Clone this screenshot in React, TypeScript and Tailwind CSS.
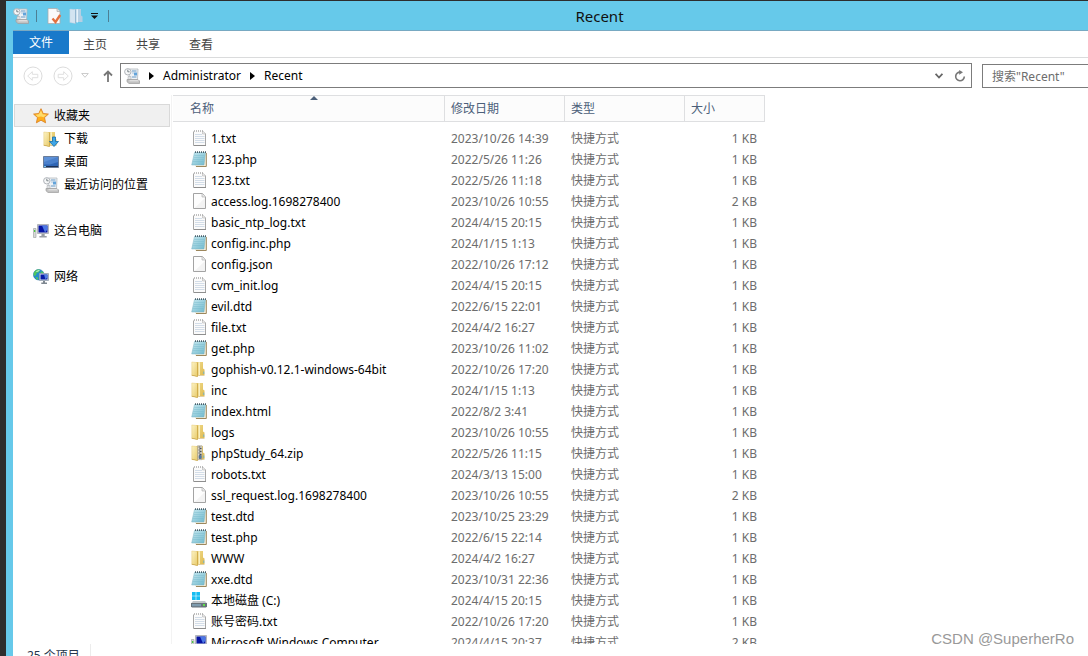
import type { ReactNode } from "react";

type IconKind =
  | "text" | "notepad" | "blank" | "folder" | "zip" | "drive" | "computer"
  | "star" | "download" | "desktop" | "recent" | "network" | "properties" | "newFolder";

type FileRow = { name: string; icon: IconKind; date: string; size: string };

const FILES: FileRow[] = [
  { name: "1.txt", icon: "text", date: "2023/10/26 14:39", size: "1 KB" },
  { name: "123.php", icon: "notepad", date: "2022/5/26 11:26", size: "1 KB" },
  { name: "123.txt", icon: "text", date: "2022/5/26 11:18", size: "1 KB" },
  { name: "access.log.1698278400", icon: "blank", date: "2023/10/26 10:55", size: "2 KB" },
  { name: "basic_ntp_log.txt", icon: "text", date: "2024/4/15 20:15", size: "1 KB" },
  { name: "config.inc.php", icon: "notepad", date: "2024/1/15 1:13", size: "1 KB" },
  { name: "config.json", icon: "blank", date: "2022/10/26 17:12", size: "1 KB" },
  { name: "cvm_init.log", icon: "text", date: "2024/4/15 20:15", size: "1 KB" },
  { name: "evil.dtd", icon: "notepad", date: "2022/6/15 22:01", size: "1 KB" },
  { name: "file.txt", icon: "text", date: "2024/4/2 16:27", size: "1 KB" },
  { name: "get.php", icon: "notepad", date: "2023/10/26 11:02", size: "1 KB" },
  { name: "gophish-v0.12.1-windows-64bit", icon: "folder", date: "2022/10/26 17:20", size: "1 KB" },
  { name: "inc", icon: "folder", date: "2024/1/15 1:13", size: "1 KB" },
  { name: "index.html", icon: "notepad", date: "2022/8/2 3:41", size: "1 KB" },
  { name: "logs", icon: "folder", date: "2023/10/26 10:55", size: "1 KB" },
  { name: "phpStudy_64.zip", icon: "zip", date: "2022/5/26 11:15", size: "1 KB" },
  { name: "robots.txt", icon: "text", date: "2024/3/13 15:00", size: "1 KB" },
  { name: "ssl_request.log.1698278400", icon: "blank", date: "2023/10/26 10:55", size: "2 KB" },
  { name: "test.dtd", icon: "notepad", date: "2023/10/25 23:29", size: "1 KB" },
  { name: "test.php", icon: "notepad", date: "2022/6/15 22:14", size: "1 KB" },
  { name: "WWW", icon: "folder", date: "2024/4/2 16:27", size: "1 KB" },
  { name: "xxe.dtd", icon: "notepad", date: "2023/10/31 22:36", size: "1 KB" },
  { name: "本地磁盘 (C:)", icon: "drive", date: "2024/4/15 20:15", size: "1 KB" },
  { name: "账号密码.txt", icon: "text", date: "2022/10/26 17:20", size: "1 KB" },
  { name: "Microsoft Windows Computer", icon: "computer", date: "2024/4/15 20:37", size: "2 KB" },
];

const FAVORITES: { name: string; icon: IconKind }[] = [
  { name: "下载", icon: "download" },
  { name: "桌面", icon: "desktop" },
  { name: "最近访问的位置", icon: "recent" },
];

const FOLDER_ART = (
  <>
    <path d="M5 1h7v6.5l1.5 1V14H5z" fill="url(#folder-back)" />
    <path d="M7.5 1.3H9v13.2H7.5z" fill="#faf0bf" />
    <path d="M.8 1l5.7.6v14L.8 14.4z" fill="url(#folder-front)" stroke="#e0c063" strokeWidth=".4" />
    <path d="M6 1.6h1v14H6z" fill="#c9a33f" opacity=".75" />
    <path d="M.8 13.8l5.7 1.4v.6L.8 14.6zM7 14h6.5v.6H7z" fill="#c4a04a" />
    <path d="M12.4 10.5h.8V13h-.8z" fill="#5cb0dc" />
  </>
);

const ICON_ART: Record<IconKind, ReactNode> = {
  text: (
    <>
      <path d="M2.5 1h9.5l2.5 3v11.5h-12z" fill="#fbfbfb" />
      <path d="M2.5 1.5v14h12V4" fill="none" stroke="#a6a6a6" />
      <path d="M3 15.5h12" stroke="#8e8e8e" />
      <path d="M11.5.8V4H15z" fill="#e9e9e9" stroke="#b5b5b5" strokeWidth=".6" />
      <path d="M3 1h9" stroke="#ababab" strokeWidth="1.6" strokeDasharray="1 1" />
      <path d="M4 4.5h7M4 6.5h9.5M4 8.5h9.5M4 10.5h9.5M4 12.5h9.5" stroke="#d3dde8" />
    </>
  ),
  notepad: (
    <>
      <path d="M5 1.5h10.5v14H4z" fill="#f5eedb" />
      <path d="M15.3 2v13.5H5" fill="none" stroke="#9d875c" />
      <path d="M3.5 1.5h11L13 14H.7z" fill="url(#notepad-page)" stroke="#78b3c3" strokeWidth=".5" />
      <path d="M3.4 4.5h10M3 6.5h10M2.5 8.5h10.3M2 10.5h10.5" stroke="#75b8c9" strokeWidth=".4" />
      <path d="M4 1.2h11" stroke="#4a606c" strokeWidth="1.7" strokeDasharray="1 1" />
    </>
  ),
  blank: (
    <>
      <path d="M2.5.5h9l3 3.5v11.5h-12z" fill="#fdfdfd" stroke="#a3a3a3" />
      <path d="M11 .5V4h3.5" fill="#e9e9e9" stroke="#b3b3b3" strokeWidth=".7" />
      <path d="M3.5 15L14 5v10z" fill="#f3f3f3" />
    </>
  ),
  folder: FOLDER_ART,
  zip: (
    <>
      {FOLDER_ART}
      <path d="M6.5.7h4.5v14H6.5z" fill="#dcd8c9" stroke="#9e9883" strokeWidth=".5" />
      <path d="M7.5 2h2M8.5 3.5h2M7.5 5h2M8.5 6.5h2M7.5 8h2M8.5 9.5h2" stroke="#50545a" />
      <path d="M8 10.5h2.3v3H8z" fill="#5380b0" stroke="#454f5b" strokeWidth=".5" />
    </>
  ),
  drive: (
    <>
      <path d="M1 0h3.7v3.7H1zM5.3 0H9v3.7H5.3zM1 4.3h3.7V8H1zM5.3 4.3H9V8H5.3z" fill="#15bdf2" />
      <path d="M2 9h12l2 2.5H0z" fill="#c0c6ca" />
      <path d="M0 11h16v3.5l-1 1H1l-1-1z" fill="#68737b" />
      <path d="M1 12h9v2.3H1z" fill="#7d9bae" />
      <path d="M12 12h2v2h-2z" fill="#5ee04a" />
    </>
  ),
  computer: (
    <>
      <path d="M.5 5.5h2.5v9H.5z" fill="#d7d9d8" stroke="#a4a8a8" strokeWidth=".7" />
      <path d="M1 7h1.3v2H1z" fill="#4dc743" />
      <path d="M4.5 1.5h11v9h-11z" fill="#d7d9dc" stroke="#a4a7ae" strokeWidth=".8" />
      <path d="M5.5 2.5h9v7h-9z" fill="#0714a3" />
      <path d="M9 2.5h5.5v4L12 9.5z" fill="#4c77e4" />
      <path d="M8.5 11h3.2v2h2v1.6H6.4V13h2z" fill="#999ea4" />
    </>
  ),
  star: (
    <>
      <path d="M8 .7l2.2 4.8 5.2.6-3.9 3.5 1.1 5.2L8 12.2l-4.6 2.6 1.1-5.2L.6 6.1l5.2-.6z" fill="#ffae1c" stroke="#dc8527" strokeWidth=".9" strokeLinejoin="round" />
      <path d="M8 2.4l1.6 3.9 4 .5-3 2.4-2.6-.7-3.2.6-2.3-2.3 3.3-.5z" fill="#ffdc6a" />
    </>
  ),
  download: (
    <>
      {FOLDER_ART}
      <path d="M9.5 6h3v4.5h3L11 15.5l-4.5-5h3z" fill="#3fa6e8" stroke="#156ca8" strokeWidth=".8" />
    </>
  ),
  desktop: (
    <>
      <path d="M.5 2.5h15v11H.5z" fill="#2e65b5" stroke="#6b7d98" />
      <path d="M1 3h14v5L7 10.5H1z" fill="#4a80cc" />
      <path d="M1 3h14L1 8z" fill="#6798db" opacity=".7" />
      <path d="M1 12h14v1H1z" fill="#1b2f53" />
      <path d="M1 12h2v1H1z" fill="#6fc2ef" />
    </>
  ),
  recent: (
    <>
      <path d="M5.5 1h8.5l-.5 11H5z" fill="#eef2f6" stroke="#b3b9be" strokeWidth=".8" />
      <path d="M8 3h4.5M8.5 5h1M8 9h4.5" stroke="#699ac5" />
      <path d="M10 4.5h3v3h-3z" fill="#62a3da" />
      <path d="M4 8.5h3v3H4z" fill="#dfe1e3" stroke="#a9adb0" strokeWidth=".5" />
      <path d="M3 11.5h10l2.5 1.3v2.7H5L3 13.8z" fill="#c2c2c2" stroke="#9c9c9c" strokeWidth=".7" />
      <path d="M5.5 12.8h9" stroke="#ececec" />
      <circle cx="3.8" cy="3.8" r="3.2" fill="#f6f7f8" stroke="#a8adb2" strokeWidth=".9" />
      <path d="M3.8 1.7v2.1h1.8" fill="none" stroke="#5e6970" strokeWidth=".8" />
    </>
  ),
  network: (
    <>
      <circle cx="5.7" cy="5.7" r="5.3" fill="#248dcd" stroke="#176da8" strokeWidth=".5" />
      <path d="M2 2.1C3.7.4 5.8.3 7 1L5.9 3.2 3.7 4 3 6.3.9 7C.3 5 .8 3.3 2 2.1zM7.5 2.5l2.6.2.8 2.4-2.7.2zM2.5 8l2.2.3.5 2.3-1.5-.2z" fill="#4fc65d" />
      <path d="M3.4 2.5l3-1" stroke="#d3f6ea" />
      <path d="M6.5 4.5h9v7h-9z" fill="#dce3ea" stroke="#8f9cac" strokeWidth=".8" />
      <path d="M7.5 5.5h7v5h-7z" fill="#091ca6" />
      <path d="M11 5.5h3.5v2.8l-2 2.2z" fill="#527ee4" />
      <path d="M10 12h2v1.5h2v1.5H8.3v-1.5H10z" fill="#7e8790" />
    </>
  ),
  properties: (
    <>
      <path d="M1 .5h9l3 3v12H1z" fill="#fafafa" stroke="#a9acae" strokeWidth=".8" />
      <path d="M10 .5v3h3" fill="#ddd" stroke="#aaa" strokeWidth=".7" />
      <path d="M5.5 10.5L8.5 14l4.7-7" fill="none" stroke="#e3703f" strokeWidth="2.3" />
    </>
  ),
  newFolder: (
    <>
      <path d="M5 1h7v6.5l1.5 1V14H5z" fill="#b5cfe3" />
      <path d="M7.5 1.3H9v13.2H7.5z" fill="#e7f2fa" />
      <path d="M.8 1l5.7.6v14L.8 14.4z" fill="#d3e4f1" stroke="#b4cde0" strokeWidth=".4" />
      <path d="M6 1.6h1v14H6z" fill="#93b6d0" />
    </>
  ),
};

/** Gradients shared by the file icons. */
function IconGradients() {
  return (
    <svg className="absolute size-0" aria-hidden="true">
      <defs>
        <linearGradient id="folder-front" x1="0" y1="0" x2="1" y2="1">
          <stop offset="0" stopColor="#fcf3c4" />
          <stop offset="1" stopColor="#e8ca69" />
        </linearGradient>
        <linearGradient id="folder-back" x1="0" y1="0" x2="1" y2="1">
          <stop offset="0" stopColor="#f0dc8e" />
          <stop offset="1" stopColor="#dfba50" />
        </linearGradient>
        <linearGradient id="notepad-page" x1="0" y1="0" x2="1" y2="1">
          <stop offset="0" stopColor="#c6e7ef" />
          <stop offset="1" stopColor="#6fb9cd" />
        </linearGradient>
      </defs>
    </svg>
  );
}

function Icon({ kind }: { kind: IconKind }) {
  return (
    <svg viewBox="0 0 16 16" className="size-4 shrink-0" aria-hidden="true">
      {ICON_ART[kind]}
    </svg>
  );
}

function RoundArrow({ flip, label }: { flip?: boolean; label: string }) {
  return (
    <button type="button" aria-label={label} disabled>
      <svg viewBox="0 0 20 20" className={flip ? "size-5 rotate-180" : "size-5"} fill="none" stroke="#dcdcdc">
        <circle cx="10" cy="10" r="9" />
        <path d="M4.7 10l4.6-4.3v2.6h5.5v3.4H9.3v2.6z" strokeWidth=".9" />
      </svg>
    </button>
  );
}

function Crumb({ name }: { name: string }) {
  return (
    <>
      <svg viewBox="0 0 5 8" className="h-2 w-[5px] shrink-0" aria-hidden="true">
        <path d="M0 0l5 4-5 4z" fill="#000" />
      </svg>
      <button type="button" className="text-black">{name}</button>
    </>
  );
}

function TitleBar() {
  return (
    <header className="flex h-[30px] shrink-0 items-center border-b border-[#78a9c2] bg-[#66c9ea]">
      <Icon kind="recent" />
      <span className="ml-[7px] h-3 w-px bg-[#4d7f94]" />
      <button type="button" aria-label="属性" className="ml-2.5"><Icon kind="properties" /></button>
      <button type="button" aria-label="新建文件夹" className="ml-1.5"><Icon kind="newFolder" /></button>
      <button type="button" aria-label="自定义快速访问工具栏" className="ml-[6px]">
        <svg viewBox="0 0 7 6" className="h-1.5 w-[7px]">
          <path d="M0 0h7v1H0zM0 2.5h7L3.5 6z" fill="#111" />
        </svg>
      </button>
      <span className="ml-2.5 h-3 w-px bg-[#4d7f94]" />
      <h1 className="flex-1 pl-0.5 text-center text-[15px] leading-5 text-[#111]">Recent</h1>
    </header>
  );
}

function RibbonTabs() {
  return (
    <nav className="flex h-[27px] shrink-0 border-b border-[#dadbdc]">
      <button type="button" className="h-[23px] w-14 bg-[#1979ca] text-white">文件</button>
      {["主页", "共享", "查看"].map((tab) => (
        <button key={tab} type="button" className="w-[53px] pt-px pr-px text-[#444]">{tab}</button>
      ))}
    </nav>
  );
}

function AddressRow() {
  return (
    <div className="flex shrink-0 items-center pt-[5px] pb-[7px] pl-2.5">
      <RoundArrow label="后退" />
      <span className="w-2.5" />
      <RoundArrow flip label="前进" />
      <button type="button" aria-label="最近浏览的位置" className="ml-2">
        <svg viewBox="0 0 8 5" className="h-[5px] w-2">
          <path d="M.7.5h6.6L4 4.3z" fill="none" stroke="#ccc" />
        </svg>
      </button>
      <button type="button" aria-label="上移" className="ml-3.5">
        <svg viewBox="0 0 10 12" className="h-3 w-2.5" fill="none" stroke="#777" strokeWidth="1.8">
          <path d="M5 12V1.5M1 5.5l4-4 4 4" />
        </svg>
      </button>
      <div className="ml-[7px] flex h-[25px] min-w-0 flex-1 items-center gap-[9px] border border-[#7c7c7c] px-[3px]">
        <Icon kind="recent" />
        <Crumb name="Administrator" />
        <Crumb name="Recent" />
        <span className="flex-1" />
        <button type="button" aria-label="历史记录">
          <svg viewBox="0 0 8 6" className="h-1.5 w-2" fill="none" stroke="#666" strokeWidth="1.8">
            <path d="M.6.8L4 4.5 7.4.8" />
          </svg>
        </button>
        <button type="button" aria-label="刷新" className="mx-0.5">
          <svg viewBox="0 0 12 12" className="size-3" fill="none" stroke="#777" strokeWidth="1.6">
            <path d="M6.5 2.2A4.3 4.3 0 1 0 10.3 6.5" />
            <path d="M5.2 0l3.8 2.3-3.8 2.5z" fill="#777" stroke="none" />
          </svg>
        </button>
      </div>
      <input
        type="search"
        aria-label="搜索"
        placeholder={'搜索"Recent"'}
        className="ml-2.5 h-6 w-[106px] self-end border border-r-0 border-[#7c7c7c] px-[9px] placeholder:text-[#6d6d6d]"
      />
    </div>
  );
}

function Sidebar() {
  return (
    <aside className="w-[159px] shrink-0 border-r border-[#f3f3f3] px-px pt-[9px] text-black">
      <a href="#favorites" className="flex h-[23px] items-center gap-[5px] border border-[#d9d9d9] bg-[#f0f0f0] pl-[18px]">
        <Icon kind="star" />收藏夹
      </a>
      {FAVORITES.map((item) => (
        <a key={item.name} href="#favorites" className="flex h-[23px] items-center gap-[5px] pl-[29px]">
          <Icon kind={item.icon} />{item.name}
        </a>
      ))}
      <a href="#computer" className="mt-[23px] flex h-[23px] items-center gap-[5px] pl-[19px]">
        <Icon kind="computer" />这台电脑
      </a>
      <a href="#network" className="mt-[23px] flex h-[23px] items-center gap-[5px] pl-[19px]">
        <Icon kind="network" />网络
      </a>
    </aside>
  );
}

function FileTable() {
  return (
    <div className="min-w-0 flex-1 overflow-hidden pl-px">
      <table className="w-[592px] table-fixed border-separate border-spacing-0 text-left">
        <thead>
          <tr className="h-[27px] bg-[#fcfcfc] text-[#4c607a] *:border-y *:border-r *:border-[#dedfe1] *:p-0 *:font-normal">
            <th className="relative w-[272px]">
              <span className="pl-[17px]">名称</span>
              <svg viewBox="0 0 8 4" className="absolute top-0 left-[137px] h-1 w-2" aria-hidden="true">
                <path d="M4 0l4 4H0z" fill="#4c607a" />
              </svg>
            </th>
            <th className="w-[120px]"><span className="pl-1.5">修改日期</span></th>
            <th className="w-[120px]"><span className="pl-1.5">类型</span></th>
            <th className="w-20"><span className="pl-1.5">大小</span></th>
          </tr>
        </thead>
        <tbody className="text-[#6d6d6d] before:block before:h-1.5">
          {FILES.map((file) => (
            <tr key={file.name} className="h-[21px] *:p-0">
              <td>
                <div className="flex items-start gap-1 pl-[18px] leading-[17px] whitespace-nowrap text-black">
                  <Icon kind={file.icon} />{file.name}
                </div>
              </td>
              <td><span className="pl-1.5">{file.date}</span></td>
              <td><span className="pl-1.5">快捷方式</span></td>
              <td className="text-right"><span className="pr-2">{file.size}</span></td>
            </tr>
          ))}
        </tbody>
      </table>
    </div>
  );
}

export default function App() {
  return (
    <div className="relative h-screen overflow-hidden bg-[#2d2d2d] pt-px pl-1.5 font-['Noto_Sans','Noto_Sans_CJK_SC',sans-serif] text-xs">
      <IconGradients />
      <div className="h-full bg-[#66c9ea] pl-[7px]">
        <div className="flex h-full flex-col bg-white">
          <TitleBar />
          <RibbonTabs />
          <AddressRow />
          <main className="flex min-h-0 flex-1 overflow-hidden">
            <Sidebar />
            <FileTable />
          </main>
          <footer className="flex h-3 shrink-0 items-start overflow-hidden text-[#26364d]">
            <span className="border-r border-[#ececec] pr-2.5 pl-3.5 leading-6">25 个项目</span>
          </footer>
        </div>
      </div>
      <span className="absolute right-3.5 bottom-[7px] font-['Liberation_Sans',sans-serif] text-[15px] leading-5 text-[#999]">
        CSDN @SuperherRo
      </span>
    </div>
  );
}
